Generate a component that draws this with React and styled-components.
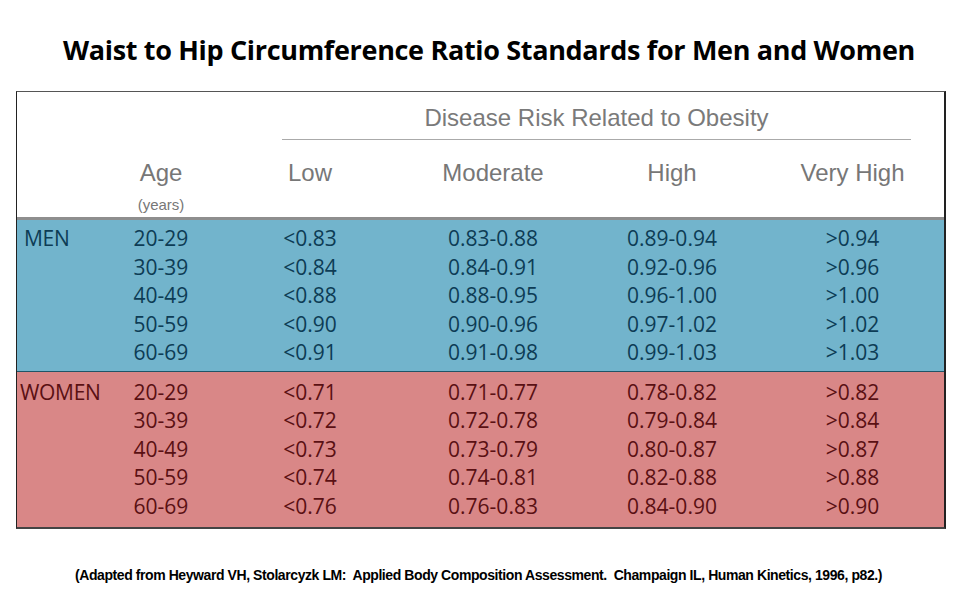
import React from "react";
import styled, { createGlobalStyle } from "styled-components";

const GlobalStyle = createGlobalStyle`
    html, body {
        margin: 0;
        padding: 0;
        background: #fff;
        width: 960px;
        height: 600px;
        overflow: hidden;
    }
`;

const Page = styled.div`
    width: 960px;
    height: 600px;
    display: flex;
    flex-direction: column;
    align-items: flex-start;
`;

const Title = styled.h1`
    margin: 31px 0 0 63px;
    height: 38px;
    font-family: "Open Sans", sans-serif;
    font-weight: 700;
    font-size: 27px;
    line-height: 38px;
    letter-spacing: -0.33px;
    color: #000;
    white-space: nowrap;
`;

const Table = styled.div`
    margin: 22px 0 0 16px;
    width: 927px;
    border-left: 1px solid #222;
    border-top: 1px solid #555;
    border-right: 2px solid #222;
    border-bottom: 2px solid #444;
`;

// shared column sizes for header and rows
const cols = "88px 112px 186px 180px 178px 183px";

const Header = styled.div`
    display: grid;
    grid-template-columns: ${cols};
    height: 125px;
    border-bottom: 3px solid #8e8e8e;
    font-family: "Liberation Sans", Arial, sans-serif;
    color: #777;
`;

const GroupHead = styled.div`
    grid-column: 3 / 7;
    grid-row: 1;
    margin: 0 33px 0 65px;
    height: 48px;
    border-bottom: 1px solid #aaa;
    display: flex;
    align-items: center;
    justify-content: center;
    padding-top: 4px;
    box-sizing: border-box;
    font-size: 24px;
    color: #7a7a7a;
`;

const ColHead = styled.div`
    grid-column: ${(p) => p.col};
    grid-row: 2;
    display: flex;
    flex-direction: column;
    align-items: center;
    padding-top: 14px;
    font-size: 24px;
    line-height: 28px;
`;

const Sub = styled.span`
    font-size: 15px;
    line-height: 16px;
    margin-top: 10px;
`;

const Section = styled.div`
    background: ${(p) => p.bg};
    color: ${(p) => p.fg};
    padding: ${(p) => p.pad};
    border-bottom: ${(p) => p.divider || "none"};
    font-family: "Open Sans", sans-serif;
    font-size: 21px;
`;

const Row = styled.div`
    display: grid;
    grid-template-columns: ${cols};
    height: 28.5px;
    align-items: center;
    line-height: 28px;
`;

const GroupLabel = styled.div`
    padding-left: ${(p) => p.indent}px;
    letter-spacing: -0.3px;
`;

const Cell = styled.div`
    text-align: center;
`;

const Footnote = styled.p`
    margin: 38px 0 0 75px;
    font-family: "Liberation Sans", Arial, sans-serif;
    font-weight: 700;
    font-size: 14px;
    letter-spacing: -0.42px;
    color: #000;
    white-space: nowrap;
`;

const men = [
    ["20-29", "<0.83", "0.83-0.88", "0.89-0.94", ">0.94"],
    ["30-39", "<0.84", "0.84-0.91", "0.92-0.96", ">0.96"],
    ["40-49", "<0.88", "0.88-0.95", "0.96-1.00", ">1.00"],
    ["50-59", "<0.90", "0.90-0.96", "0.97-1.02", ">1.02"],
    ["60-69", "<0.91", "0.91-0.98", "0.99-1.03", ">1.03"],
];

const women = [
    ["20-29", "<0.71", "0.71-0.77", "0.78-0.82", ">0.82"],
    ["30-39", "<0.72", "0.72-0.78", "0.79-0.84", ">0.84"],
    ["40-49", "<0.73", "0.73-0.79", "0.80-0.87", ">0.87"],
    ["50-59", "<0.74", "0.74-0.81", "0.82-0.88", ">0.88"],
    ["60-69", "<0.76", "0.76-0.83", "0.84-0.90", ">0.90"],
];

function Group({ label, indent, rows }) {
    return rows.map((r, i) => (
        <Row key={i}>
            <GroupLabel indent={indent}>{i === 0 ? label : ""}</GroupLabel>
            {r.map((v, j) => (
                <Cell key={j}>{v}</Cell>
            ))}
        </Row>
    ));
}

export default function App() {
    return (
        <Page>
            <GlobalStyle />
            <Title>Waist to Hip Circumference Ratio Standards for Men and Women</Title>
            <Table>
                <Header>
                    <GroupHead>Disease Risk Related to Obesity</GroupHead>
                    <ColHead col={2}>
                        Age
                        <Sub>(years)</Sub>
                    </ColHead>
                    <ColHead col={3}>Low</ColHead>
                    <ColHead col={4}>Moderate</ColHead>
                    <ColHead col={5}>High</ColHead>
                    <ColHead col={6}>Very High</ColHead>
                </Header>
                <Section bg="#72b4cc" fg="#0d3c55" pad="4px 0 4px" divider="1px solid #1f5466">
                    <Group label="MEN" indent={7} rows={men} />
                </Section>
                <Section bg="#d98787" fg="#5a1013" pad="6px 0 7px">
                    <Group label="WOMEN" indent={3} rows={women} />
                </Section>
            </Table>
            <Footnote>
                (Adapted from Heyward VH, Stolarcyzk LM:&nbsp; Applied Body Composition Assessment.&nbsp; Champaign IL, Human Kinetics, 1996, p82.)
            </Footnote>
        </Page>
    );
}
